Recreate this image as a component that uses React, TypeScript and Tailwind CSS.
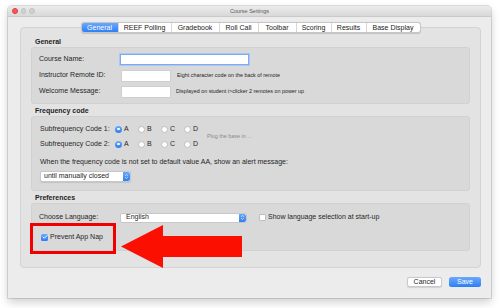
import { ChevronDown, ChevronUp, Check } from "lucide-react";

const tabs = [
  { label: "General", w: "w-[37px]", active: true },
  { label: "REEF Polling", w: "w-[53px]" },
  { label: "Gradebook", w: "w-[48px]" },
  { label: "Roll Call", w: "w-[39px]" },
  { label: "Toolbar", w: "w-[38px]" },
  { label: "Scoring", w: "w-[35px]" },
  { label: "Results", w: "w-[35px]" },
  { label: "Base Display", w: "w-[53px]" },
];

const letters = ["A", "B", "C", "D"];

function Heading({ children, tall }: { children: string; tall?: boolean }) {
  return (
    <div
      className={`${tall ? "h-[14px]" : "h-[12px]"} flex items-end pb-[1px] pl-[4px] text-[7px] leading-[8px] font-bold text-[#1e1e1e]`}
    >
      {children}
    </div>
  );
}

function Stepper() {
  return (
    <span className="flex flex-col items-center justify-center w-[7px] h-full rounded-r-[2px] bg-gradient-to-b from-[#6aa9fb] to-[#2c7df4]">
      <ChevronUp className="w-[5px] h-[4px] text-white" strokeWidth={4} />
      <ChevronDown className="w-[5px] h-[4px] -mt-[1px] text-white" strokeWidth={4} />
    </span>
  );
}

function Radio({ on }: { on?: boolean }) {
  return on ? (
    <span className="w-[7px] h-[7px] rounded-full bg-gradient-to-b from-[#6aa9fb] to-[#2b7cf3] flex items-center justify-center">
      <span className="w-[2.5px] h-[2.5px] rounded-full bg-white" />
    </span>
  ) : (
    <span className="w-[7px] h-[7px] rounded-full bg-white border border-[#bdbdbd]" />
  );
}

function RadioRow({ label }: { label: string }) {
  return (
    <div className="flex items-center h-[12px]">
      <span className="w-[75px]">{label}</span>
      {letters.map((l, i) => (
        <span key={l} className="w-[23px] flex items-center gap-[2px]">
          <Radio on={i === 0} />
          <span>{l}</span>
        </span>
      ))}
    </div>
  );
}

export default function App() {
  return (
    <div
      className="w-[500px] h-[308px] bg-white pt-[6px] pl-[8px] text-[7px] text-[#262626]"
      style={{ fontFamily: '"Liberation Sans", Arial, sans-serif' }}
    >
      <div className="relative w-[483px] h-[292px] bg-[#ececec] rounded-t-[4px] shadow-[0_0_0_1px_rgba(0,0,0,0.12),0_4px_10px_rgba(0,0,0,0.2)] flex flex-col">
        {/* Title bar */}
        <div className="grid grid-cols-[1fr_auto_1fr] items-center h-[11px] rounded-t-[4px] bg-gradient-to-b from-[#ebebeb] to-[#d9d9d9] border-b border-[#c9c9c9] px-[4px]">
          <div className="flex items-center gap-[3px]">
            <span className="w-[5.5px] h-[5.5px] rounded-full bg-[#fc5753] border border-[#df3d38]" />
            <span className="w-[5.5px] h-[5.5px] rounded-full bg-[#d0d0d0] border border-[#c2c2c2]" />
            <span className="w-[5.5px] h-[5.5px] rounded-full bg-[#d0d0d0] border border-[#c2c2c2]" />
          </div>
          <span className="text-[5.5px] text-[#5a5a5a]">Course Settings</span>
          <span />
        </div>

        {/* Tab panel */}
        <div className="mt-[10px] ml-[12px] mr-[10px] h-[241px] rounded-[4px] bg-[#e3e3e3] border border-[#d3d3d3] flex flex-col">
          <div className="-mt-[6px] h-[11px] flex justify-center">
            <div className="flex rounded-[3px] bg-white border border-[#c6c6c6] shadow-[0_0.5px_1px_rgba(0,0,0,0.15)] overflow-hidden">
              {tabs.map((t) => (
                <span
                  key={t.label}
                  className={`${t.w} flex items-center justify-center leading-none border-r border-[#d6d6d6] last:border-r-0 ${
                    t.active
                      ? "bg-gradient-to-b from-[#69a8fb] to-[#2f7ff5] text-white"
                      : "text-[#222]"
                  }`}
                >
                  {t.label}
                </span>
              ))}
            </div>
          </div>

          <div className="px-[10px] flex flex-col">
            <Heading tall>General</Heading>
            <div className="h-[57px] rounded-[3px] bg-[#d9d9d9] border border-[#d1d1d1] pl-[7px] flex flex-col justify-center gap-[4px]">
              <div className="flex items-center h-[12px]">
                <span className="w-[81px]">Course Name:</span>
                <span className="w-[129px] h-[11px] bg-white border border-[#7eaaf0] shadow-[0_0_0_1px_#a9c8f5]" />
              </div>
              <div className="flex items-center h-[12px]">
                <span className="w-[82px]">Instructor Remote ID:</span>
                <span className="w-[50px] h-[12px] bg-white border border-[#cfcfcf]" />
                <span className="ml-[6px] text-[5.4px]">Eight character code on the back of remote</span>
              </div>
              <div className="flex items-center h-[12px]">
                <span className="w-[82px]">Welcome Message:</span>
                <span className="w-[50px] h-[12px] bg-white border border-[#cfcfcf]" />
                <span className="ml-[5px] text-[5.4px]">Displayed on student i&gt;clicker 2 remotes on power up</span>
              </div>
            </div>

            <Heading>Frequency code</Heading>
            <div className="h-[75px] rounded-[3px] bg-[#d9d9d9] border border-[#d1d1d1] pl-[8px] pt-[6px] flex flex-col">
              <div className="flex items-center">
                <div className="flex flex-col gap-[3px]">
                  <RadioRow label="Subfrequency Code 1:" />
                  <RadioRow label="Subfrequency Code 2:" />
                </div>
                <span className="text-[5.4px] text-[#8a8a8a]">Plug the base in ...</span>
              </div>
              <div className="mt-[8px] h-[8px] leading-[8px]">
                When the frequency code is not set to default value AA, show an alert message:
              </div>
              <div className="mt-[5px] w-[91px] h-[11px] flex items-stretch rounded-[2px] bg-white border border-[#c8c8c8] shadow-[0_0.5px_1px_rgba(0,0,0,0.1)]">
                <span className="flex-1 flex items-center pl-[3px]">until manually closed</span>
                <Stepper />
              </div>
            </div>

            <Heading>Preferences</Heading>
            <div className="h-[48px] rounded-[3px] bg-[#d9d9d9] border border-[#d1d1d1] pl-[7px] pt-[8px] flex flex-col gap-[8px]">
              <div className="flex items-center h-[11px]">
                <span className="w-[81px]">Choose Language:</span>
                <div className="w-[127px] h-[10px] flex items-stretch rounded-[2px] bg-white border border-[#c8c8c8]">
                  <span className="flex-1 flex items-center pl-[5px]">English</span>
                  <Stepper />
                </div>
                <span className="ml-[12px] w-[7px] h-[7px] bg-white border border-[#bdbdbd] rounded-[1px]" />
                <span className="ml-[2px]">Show language selection at start-up</span>
              </div>
              <div className="flex items-center h-[12px] pl-[2px]">
                <span className="w-[7px] h-[7px] rounded-[1.5px] bg-gradient-to-b from-[#6aa9fb] to-[#2b7cf3] flex items-center justify-center">
                  <Check className="w-[6px] h-[6px] text-white" strokeWidth={4} />
                </span>
                <span className="ml-[2px]">Prevent App Nap</span>
              </div>
            </div>
          </div>
        </div>

        {/* Buttons */}
        <div className="mt-[9px] pr-[10px] flex justify-end gap-[7px]">
          <span className="w-[35px] h-[10px] flex items-center justify-center rounded-[2.5px] bg-white border border-[#c9c9c9] shadow-[0_0.5px_1px_rgba(0,0,0,0.12)]">
            Cancel
          </span>
          <span className="w-[32px] h-[10px] flex items-center justify-center rounded-[2.5px] bg-gradient-to-b from-[#6aa9fb] to-[#2c7df4] text-white">
            Save
          </span>
        </div>

        {/* Annotation overlay: red box and arrow */}
        <div className="absolute left-[22px] top-[217px] w-[86px] h-[31px] border-[3px] border-[#f20000]" />
        <svg className="absolute left-[113px] top-[219px]" width="121" height="43" viewBox="0 0 121 43">
          <polygon points="0,21.5 42,0 42,11 121,11 121,32 42,32 42,43" fill="#fa0f00" />
        </svg>
      </div>
    </div>
  );
}
